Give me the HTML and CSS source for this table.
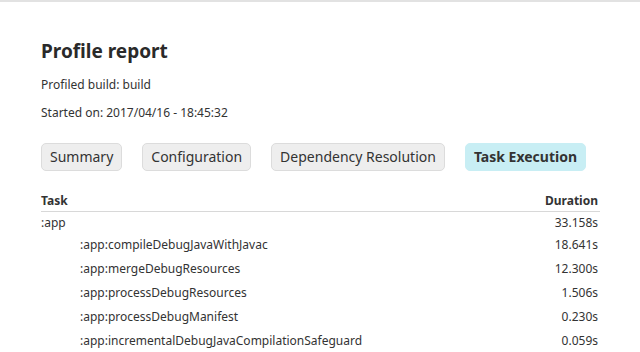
FILE: index.html
```html
<!DOCTYPE html>
<html>
<head>
<meta charset="utf-8">
<link rel="stylesheet" href="styles.css">
</head>
<body>
<div class="page">
  <h1 class="title">Profile report</h1>
  <p class="meta">Profiled build: build</p>
  <p class="meta">Started on: 2017/04/16 - 18:45:32</p>
  <div class="tabs">
    <span class="tab">Summary</span>
    <span class="tab">Configuration</span>
    <span class="tab">Dependency Resolution</span>
    <span class="tab active">Task Execution</span>
  </div>
  <table class="tasks">
    <thead>
      <tr><th class="name">Task</th><th class="dur">Duration</th></tr>
    </thead>
    <tbody>
      <tr><td class="name">:app</td><td class="dur">33.158s</td></tr>
      <tr><td class="name sub">:app:compileDebugJavaWithJavac</td><td class="dur">18.641s</td></tr>
      <tr><td class="name sub">:app:mergeDebugResources</td><td class="dur">12.300s</td></tr>
      <tr><td class="name sub">:app:processDebugResources</td><td class="dur">1.506s</td></tr>
      <tr><td class="name sub">:app:processDebugManifest</td><td class="dur">0.230s</td></tr>
      <tr><td class="name sub">:app:incrementalDebugJavaCompilationSafeguard</td><td class="dur">0.059s</td></tr>
    </tbody>
  </table>
</div>
</body>
</html>
```
FILE: styles.css
```css
html, body {
  margin: 0;
  padding: 0;
  background: #fff;
}
body {
  border-top: 2px solid #e2e2e2;
  font-family: "Noto Sans", "Noto Sans CJK KR", sans-serif;
  color: #333;
}
.page {
  padding: 36px 40px 0 41px;
}
.title {
  margin: 0;
  font-size: 19px;
  font-weight: 700;
  line-height: 26px;
  color: #2a2a2a;
}
.meta {
  margin: 0;
  font-size: 12px;
  line-height: 28px;
}
.title + .meta {
  margin-top: 7px;
}
.tabs {
  display: flex;
  gap: 20px;
  margin-top: 16px;
}
.tab {
  display: block;
  box-sizing: border-box;
  height: 28px;
  line-height: 26px;
  padding: 0 8px;
  font-size: 14px;
  background: #eeeeee;
  border: 1px solid #dcdcdc;
  border-radius: 5px;
  color: #333;
}
.tab.active {
  background: #c8eef4;
  border-color: #c8eef4;
  font-weight: 700;
}
.tasks {
  width: 100%;
  margin-top: 22px;
  border-collapse: collapse;
  font-size: 12px;
}
.tasks th {
  font-weight: 700;
  padding: 0 0 2px;
  line-height: 16px;
  border-bottom: 1px solid #d8d8d8;
}
.tasks td {
  padding: 0;
  line-height: 24px;
}
.tasks tbody tr:first-child td {
  line-height: 21px;
}
.name {
  text-align: left;
}
.tasks td.dur, .tasks th.dur {
  text-align: right;
  padding-right: 2px;
}
.tasks td.sub {
  padding-left: 39px;
}
```
